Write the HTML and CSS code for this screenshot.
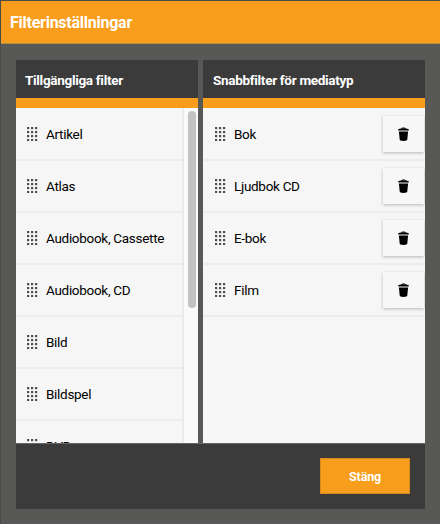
FILE: index.html
```html
<!DOCTYPE html>
<html lang="sv">
<head>
<meta charset="utf-8">
<title>Filterinställningar</title>
<link rel="stylesheet" href="styles.css">
</head>
<body>
<svg class="defs" width="0" height="0" aria-hidden="true">
  <symbol id="grip" viewBox="0 0 11 14">
    <g fill="#4f4f4f">
      <rect x="0" y="0" width="2.2" height="2.2"/><rect x="4" y="0" width="2.2" height="2.2"/><rect x="8" y="0" width="2.2" height="2.2"/>
      <rect x="0" y="4" width="2.2" height="2.2"/><rect x="4" y="4" width="2.2" height="2.2"/><rect x="8" y="4" width="2.2" height="2.2"/>
      <rect x="0" y="8" width="2.2" height="2.2"/><rect x="4" y="8" width="2.2" height="2.2"/><rect x="8" y="8" width="2.2" height="2.2"/>
      <rect x="0" y="12" width="2.2" height="2.2"/><rect x="4" y="12" width="2.2" height="2.2"/><rect x="8" y="12" width="2.2" height="2.2"/>
    </g>
  </symbol>
  <symbol id="trash" viewBox="0 0 11 14">
    <path d="M3.2 1.5 C3.6 .3 7.4 .3 7.8 1.5 L10.3 1.9 C11 2.1 11 3.5 10.3 3.6 L.7 3.6 C0 3.5 0 2.1 .7 1.9 Z M4.2 1.8 H6.8 C6.4 1.3 4.6 1.3 4.2 1.8 Z" fill="#000" fill-rule="evenodd"/>
    <path d="M.9 4.6 H10.1 L9.3 12.6 C9.2 13.6 8 14 5.5 14 C3 14 1.8 13.6 1.7 12.6 Z" fill="#000"/>
  </symbol>
</svg>
<div class="modal">
  <header class="modal-head">Filterinställningar</header>
  <div class="modal-body">
    <div class="columns">
      <section class="panel panel-left">
        <h2 class="panel-title">Tillgängliga filter</h2>
        <div class="panel-accent"></div>
        <div class="list-wrap">
          <ul class="list">
            <li class="row"><svg class="grip"><use href="#grip"/></svg><span>Artikel</span></li>
            <li class="row"><svg class="grip"><use href="#grip"/></svg><span>Atlas</span></li>
            <li class="row"><svg class="grip"><use href="#grip"/></svg><span>Audiobook, Cassette</span></li>
            <li class="row"><svg class="grip"><use href="#grip"/></svg><span>Audiobook, CD</span></li>
            <li class="row"><svg class="grip"><use href="#grip"/></svg><span>Bild</span></li>
            <li class="row"><svg class="grip"><use href="#grip"/></svg><span>Bildspel</span></li>
            <li class="row"><svg class="grip"><use href="#grip"/></svg><span>DVD</span></li>
          </ul>
          <div class="scrollbar"><div class="thumb"></div></div>
        </div>
      </section>
      <section class="panel panel-right">
        <h2 class="panel-title">Snabbfilter för mediatyp</h2>
        <div class="panel-accent"></div>
        <div class="list-wrap">
          <ul class="list">
            <li class="row"><svg class="grip"><use href="#grip"/></svg><span>Bok</span><button class="del" aria-label="Ta bort"><svg class="trash"><use href="#trash"/></svg></button></li>
            <li class="row"><svg class="grip"><use href="#grip"/></svg><span>Ljudbok CD</span><button class="del" aria-label="Ta bort"><svg class="trash"><use href="#trash"/></svg></button></li>
            <li class="row"><svg class="grip"><use href="#grip"/></svg><span>E-bok</span><button class="del" aria-label="Ta bort"><svg class="trash"><use href="#trash"/></svg></button></li>
            <li class="row"><svg class="grip"><use href="#grip"/></svg><span>Film</span><button class="del" aria-label="Ta bort"><svg class="trash"><use href="#trash"/></svg></button></li>
          </ul>
        </div>
      </section>
    </div>
    <footer class="modal-foot"><button class="close">Stäng</button></footer>
  </div>
</div>
</body>
</html>
```
FILE: styles.css
```css
* { box-sizing: border-box; }
html, body { margin: 0; height: 100%; }
body {
  background: #4a4a48;
  overflow: hidden;
  font-family: Roboto, "Liberation Sans", sans-serif;
}
.defs { position: absolute; }
.modal {
  margin: 1px 0 0 1px;
  height: 523px;
  background: #585856;
  display: flex;
  flex-direction: column;
}
.modal-head {
  height: 43px;
  flex: none;
  background: #f99d1c;
  border-bottom: 1px solid #b98a3c;
  color: #fff;
  font-size: 16px;
  font-weight: 700;
  letter-spacing: -.25px;
  line-height: 44px;
  padding-left: 9px;
}
.modal-body {
  padding: 16px 15px 15px 15px;
  flex: 1;
  min-height: 0;
  display: flex;
  flex-direction: column;
}
.columns { display: flex; gap: 5px; height: 383px; flex: none; }
.panel { display: flex; flex-direction: column; min-width: 0; }
.panel-left { width: 182px; }
.panel-right { width: 222px; }
.panel-title {
  margin: 0;
  height: 38px;
  flex: none;
  background: #3b3b3b;
  color: #fff;
  font-size: 13.5px;
  font-weight: 700;
  letter-spacing: -.3px;
  line-height: 41px;
  padding-left: 10px;
}
.panel-left .panel-title { padding-left: 9px; }
.panel-accent { height: 10px; flex: none; background: #f99d1c; }
.list-wrap {
  position: relative;
  flex: 1;
  min-height: 0;
  overflow: hidden;
  background: #f7f7f7;
}
.list { list-style: none; margin: 0; padding: 1px 0 0; }
.panel-left .list { width: 167px; }
.row {
  height: 52px;
  padding-left: 12px;
  display: flex;
  align-items: center;
  gap: 8px;
  background: #f6f6f6;
  border-bottom: 2px solid #ececec;
  font-size: 13.5px;
  letter-spacing: -.3px;
  color: #000;
}
.panel-left .row { padding-left: 11px; border-right: 1px solid #ececec; }
.grip { width: 11px; height: 14px; flex: none; }
.del {
  margin: 0 1px 0 auto;
  width: 41px;
  height: 36px;
  padding: 0;
  border: 0;
  background: #f7f7f7;
  box-shadow: 0 1px 3px rgba(0, 0, 0, .25);
  display: flex;
  align-items: center;
  justify-content: center;
}
.trash { width: 11px; height: 14px; }
.scrollbar {
  position: absolute;
  top: 0;
  right: 0;
  bottom: 0;
  width: 15px;
  background: #fafafa;
  border-left: 1px solid #e8e8e8;
}
.thumb {
  position: absolute;
  top: 3px;
  left: 4px;
  width: 8px;
  height: 197px;
  background: #c2c2c2;
  border-radius: 4px;
}
.modal-foot {
  height: 66px;
  flex: none;
  width: 409px;
  background: #3b3b3b;
  border-top: 1px solid #666;
  display: flex;
  justify-content: flex-end;
  align-items: center;
  padding: 0 15px 1px 0;
}
.close {
  width: 90px;
  height: 36px;
  border: 1px solid #d98a1c;
  background: #f99d1c;
  color: #fff;
  font: 700 12.5px Roboto, "Liberation Sans", sans-serif;
  letter-spacing: -.2px;
}
```
